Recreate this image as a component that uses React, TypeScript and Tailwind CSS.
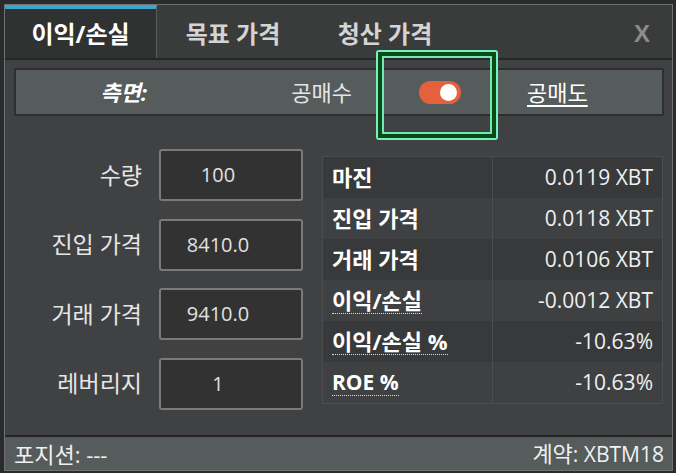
import React from "react";

const font = "font-['Open_Sans','Noto_Sans_CJK_KR',sans-serif]";

const rows: { label: string; value: string; dotted?: boolean; latin?: boolean }[] = [
  { label: "마진", value: "0.0119 XBT" },
  { label: "진입 가격", value: "0.0118 XBT" },
  { label: "거래 가격", value: "0.0106 XBT" },
  { label: "이익/손실", value: "-0.0012 XBT", dotted: true },
  { label: "이익/손실 %", value: "-10.63%", dotted: true },
  { label: "ROE %", value: "-10.63%", dotted: true, latin: true },
];

const inputs = [
  { label: "수량", value: "100" },
  { label: "진입 가격", value: "8410.0" },
  { label: "거래 가격", value: "9410.0" },
  { label: "레버리지", value: "1" },
];

export default function App() {
  return (
    <div className={`w-[676px] h-[473px] bg-[#2a2b2c] pt-[4px] pl-[4px] pr-[3px] pb-[2px] ${font}`}>
      <div className="relative h-full flex flex-col border border-[#6f7172] bg-[#404142]">
        {/* Tabs */}
        <div className="flex h-[55px] bg-[#3a3b3b] border-b-2 border-[#252626] shrink-0">
          <div className="w-[152px] bg-[#303131] border-t-4 border-[#3aa6cc] border-r border-r-[#5c5e5e] flex items-center justify-center text-white font-bold text-[24px] leading-none">
            이익/손실
          </div>
          <div className="w-[152px] flex items-center justify-center text-[#d4d4d4] font-bold text-[24px] leading-none pt-[4px]">
            목표 가격
          </div>
          <div className="w-[152px] flex items-center justify-center text-[#d4d4d4] font-bold text-[24px] leading-none pt-[4px]">
            청산 가격
          </div>
          <div className="flex-1 flex items-center justify-end pr-[22px] pt-[4px]">
            <span className="font-['Liberation_Sans',sans-serif] font-bold text-[24px] text-[#8c8c8c]">X</span>
          </div>
        </div>

        {/* Content */}
        <div className="flex-1 flex flex-col">
          {/* Side row */}
          <div className="mt-[8px] ml-[9px] mr-[8px] h-[48px] bg-[#565b5b] border-2 border-[#2e2f30] flex items-center text-[22px] leading-none">
            <div className="w-[131px] text-right text-white font-bold italic">측면:</div>
            <div className="w-[205px] text-right text-[#e6e6e6]">공매수</div>
            <div className="w-[175px] flex justify-center">
              <div className="w-[42px] h-[23px] rounded-full bg-[#e3613c] flex items-center justify-end pr-[4px]">
                <div className="w-[17px] h-[17px] rounded-full bg-white" />
              </div>
            </div>
            <div className="text-white underline underline-offset-[4px]">공매도</div>
          </div>

          {/* Main */}
          <div className="flex mt-[33px]">
            <div className="flex flex-col gap-[17.5px]">
              {inputs.map((it) => (
                <div key={it.label} className="flex items-center">
                  <div className="w-[137px] text-right text-[#e6e6e6] text-[23px] leading-none">{it.label}</div>
                  <div className="ml-[17px] w-[144px] h-[52px] bg-[#323232] border-2 border-[#7a7a7a] rounded-[3px] flex items-center justify-center pr-[26px] text-[#e0e0e0] text-[20px]">
                    {it.value}
                  </div>
                </div>
              ))}
            </div>
            <div className="ml-[19px] mt-[7px] w-[341px] self-start border border-[#4a4c4d] bg-[#3a3b3c]">
              {rows.map((r, i) => (
                <div
                  key={r.label}
                  className={`flex h-[41px] ${i % 2 === 0 ? "bg-[#37393a]" : "bg-[#3e4041]"}`}
                >
                  <div
                    className={`w-[170px] border-r border-[#4b4d4e] flex items-center pl-[9px] text-white font-bold ${
                      r.latin ? "text-[21px]" : "text-[22px]"
                    }`}
                  >
                    <span className={r.dotted ? "border-b border-dotted border-[#dddddd] leading-[26px]" : ""}>{r.label}</span>
                  </div>
                  <div className="flex-1 flex items-center justify-end pr-[9px] text-[#f0f0f0] text-[21px]">
                    {r.value}
                  </div>
                </div>
              ))}
            </div>
          </div>

          <div className="flex-1" />

          {/* Footer */}
          <div className="h-[35px] border-t-2 border-[#232424] bg-[#565b5b] flex items-center justify-between pl-[9px] pr-[8px] text-[#f0f0f0] leading-none">
            <span className="text-[22px]">포지션: ---</span>
            <span>
              <span className="text-[22px]">계약</span>
              <span className="text-[21px]">: XBTM18</span>
            </span>
          </div>
        </div>

        {/* Highlight overlay */}
        <div className="absolute left-[371px] top-[45px] w-[122px] h-[90px] border-2 border-[#74f0c4] rounded-[3px]">
          <div className="w-full h-full border-[4px] border-[#0b4a12]">
            <div className="w-full h-full border-2 border-[#70e8b8]" />
          </div>
        </div>
      </div>
    </div>
  );
}
